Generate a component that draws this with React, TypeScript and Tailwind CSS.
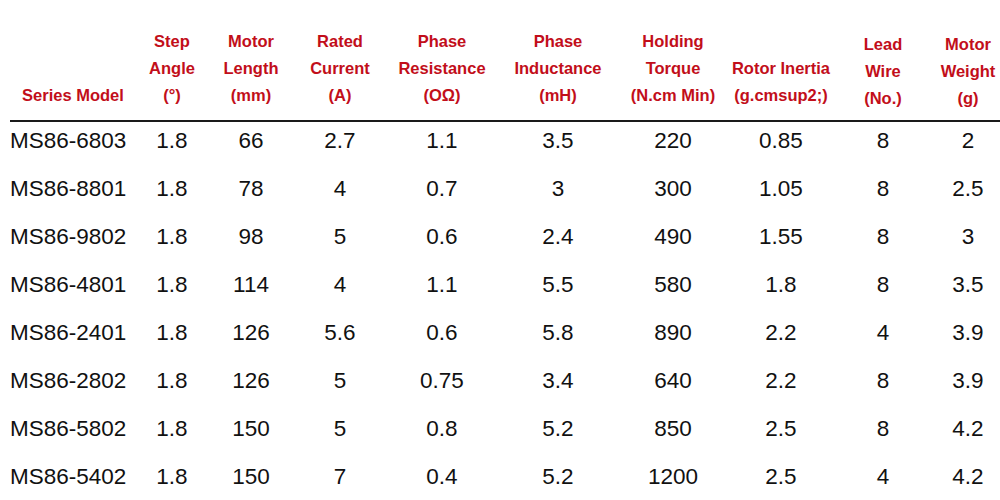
import React from "react";

const headers: { lines: string[]; low?: boolean }[] = [
  { lines: ["Series Model"] },
  { lines: ["Step", "Angle", "(°)"] },
  { lines: ["Motor", "Length", "(mm)"] },
  { lines: ["Rated", "Current", "(A)"] },
  { lines: ["Phase", "Resistance", "(OΩ)"] },
  { lines: ["Phase", "Inductance", "(mH)"] },
  { lines: ["Holding", "Torque", "(N.cm Min)"] },
  { lines: ["Rotor Inertia", "(g.cmsup2;)"], low: false },
  { lines: ["Lead", "Wire", "(No.)"], low: true },
  { lines: ["Motor", "Weight", "(g)"], low: true },
];

const rows: string[][] = [
  ["MS86-6803", "1.8", "66", "2.7", "1.1", "3.5", "220", "0.85", "8", "2"],
  ["MS86-8801", "1.8", "78", "4", "0.7", "3", "300", "1.05", "8", "2.5"],
  ["MS86-9802", "1.8", "98", "5", "0.6", "2.4", "490", "1.55", "8", "3"],
  ["MS86-4801", "1.8", "114", "4", "1.1", "5.5", "580", "1.8", "8", "3.5"],
  ["MS86-2401", "1.8", "126", "5.6", "0.6", "5.8", "890", "2.2", "4", "3.9"],
  ["MS86-2802", "1.8", "126", "5", "0.75", "3.4", "640", "2.2", "8", "3.9"],
  ["MS86-5802", "1.8", "150", "5", "0.8", "5.2", "850", "2.5", "8", "4.2"],
  ["MS86-5402", "1.8", "150", "7", "0.4", "5.2", "1200", "2.5", "4", "4.2"],
];

const cols = "grid grid-cols-[126px_72px_86px_92px_112px_120px_110px_106px_98px_72px]";

export default function App() {
  return (
    <div className="w-[1000px] h-[500px] overflow-hidden bg-white font-['Liberation_Sans',Arial,sans-serif]">
      <div className="ml-[10px] w-[1000px] pt-[28px]">
        {/* header */}
        <div className={`${cols} border-b-2 border-[#1a1a1a]`}>
          {headers.map((h, i) => (
            <div
              key={i}
              className={`flex flex-col justify-end items-center text-center text-[16.5px] leading-[27px] font-bold text-[#c20e1a] whitespace-nowrap ${
                h.low ? "pb-[8px]" : "pb-[11px]"
              }`}
            >
              {h.lines.map((l) => (
                <span key={l}>{l}</span>
              ))}
            </div>
          ))}
        </div>
        {/* body */}
        {rows.map((r) => (
          <div key={r[0]} className={`${cols} h-[48px]`}>
            {r.map((c, j) => (
              <div
                key={j}
                className={`pt-[6px] text-[22.5px] leading-[25px] text-[#111] whitespace-nowrap ${
                  j === 0 ? "text-left" : "text-center"
                }`}
              >
                {c}
              </div>
            ))}
          </div>
        ))}
      </div>
    </div>
  );
}
